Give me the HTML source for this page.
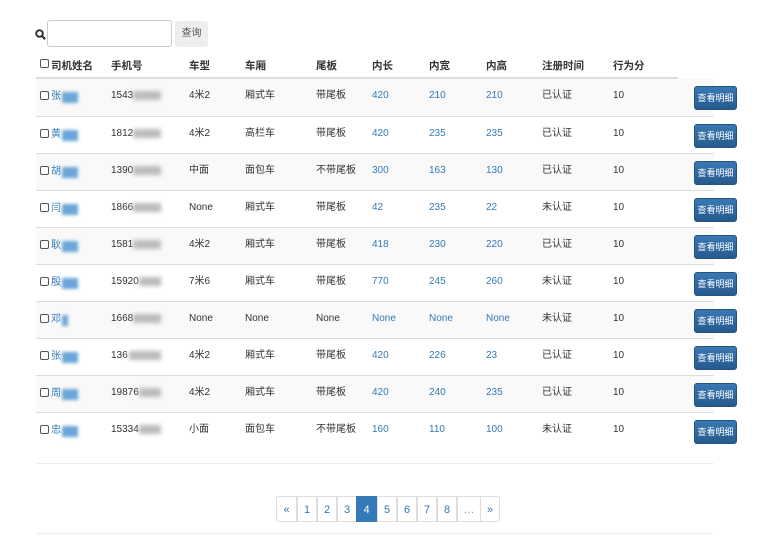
<!DOCTYPE html>
<html><head><meta charset="utf-8"><style>
body{margin:0;width:768px;height:539px;background:#fff;font-family:"Liberation Sans","Noto Sans CJK SC",sans-serif;font-size:10px;color:#333;position:relative;overflow:hidden}
.a{position:absolute;white-space:nowrap}
.row{position:absolute;left:36px;width:678px;height:37px;border-top:1px solid #ddd}
.row.s{background:#f9f9f9}
.row span{position:absolute;top:11px;line-height:12px}
.cb{width:7px;height:7px;border:1px solid #555;border-radius:2px;background:#fff}
.blue{color:#337ab7}
.blur{position:absolute;height:9px;background:#bbb;filter:blur(2px);top:12px}
.nb{position:absolute;height:11px;background:#6aa6d9;filter:blur(1.5px);top:13px}
.btn{position:absolute;left:658px;top:7px;width:43px;height:24px;background:linear-gradient(#3a78b4,#265a8e);border:1px solid #245580;border-radius:3px;color:#fff;font-size:9px;text-align:center;line-height:23px;box-sizing:border-box}
.pg{position:absolute;top:496px;height:26px;border:1px solid #ddd;margin-left:-1px;color:#337ab7;text-align:center;line-height:26px;font-size:11px;box-sizing:border-box}
.h{position:absolute;top:58px;font-weight:bold;font-size:10.5px}
</style></head><body>
<svg class="a" style="left:35px;top:29px" width="11" height="11" viewBox="0 0 11 11"><circle cx="4.5" cy="4.5" r="3.3" fill="none" stroke="#333" stroke-width="2"/><path d="M7 7l3.2 3.2" stroke="#333" stroke-width="2.2"/></svg>
<div class="a" style="left:47px;top:20px;width:125px;height:27px;border:1px solid #ccc;border-radius:3px;box-sizing:border-box"></div>
<div class="a" style="left:175px;top:21px;width:33px;height:26px;background:#eee;border-radius:3px;text-align:center;line-height:26px;color:#555">查询</div>
<div class="a" style="left:40px;top:59px;width:7px;height:7px;border:1px solid #555;border-radius:2px"></div>
<div class="h" style="left:51px">司机姓名</div>
<div class="h" style="left:111px">手机号</div>
<div class="h" style="left:189px">车型</div>
<div class="h" style="left:245px">车厢</div>
<div class="h" style="left:316px">尾板</div>
<div class="h" style="left:372px">内长</div>
<div class="h" style="left:429px">内宽</div>
<div class="h" style="left:486px">内高</div>
<div class="h" style="left:542px">注册时间</div>
<div class="h" style="left:613px">行为分</div>
<div class="a" style="left:36px;top:77px;width:642px;height:2px;background:#ddd"></div>

<div class="row s" style="top:79px;border-top:none"><span class="cb" style="left:4px;top:12px"></span><span class="blue" style="left:15px;top:12px">张</span><div class="nb" style="left:26px;width:16px"></div><span style="left:75px">1543</span><div class="blur" style="left:97px;width:28px"></div><span style="left:153px">4米2</span><span style="left:209px">厢式车</span><span style="left:280px">带尾板</span><span class="blue" style="left:336px">420</span><span class="blue" style="left:393px">210</span><span class="blue" style="left:450px">210</span><span style="left:506px">已认证</span><span style="left:577px">10</span><div class="btn">查看明细</div></div>
<div class="row" style="top:116px"><span class="cb" style="left:4px;top:12px"></span><span class="blue" style="left:15px;top:12px">黄</span><div class="nb" style="left:26px;width:16px"></div><span style="left:75px">1812</span><div class="blur" style="left:97px;width:28px"></div><span style="left:153px">4米2</span><span style="left:209px">高栏车</span><span style="left:280px">带尾板</span><span class="blue" style="left:336px">420</span><span class="blue" style="left:393px">235</span><span class="blue" style="left:450px">235</span><span style="left:506px">已认证</span><span style="left:577px">10</span><div class="btn">查看明细</div></div>
<div class="row s" style="top:153px"><span class="cb" style="left:4px;top:12px"></span><span class="blue" style="left:15px;top:12px">胡</span><div class="nb" style="left:26px;width:16px"></div><span style="left:75px">1390</span><div class="blur" style="left:97px;width:28px"></div><span style="left:153px">中面</span><span style="left:209px">面包车</span><span style="left:280px">不带尾板</span><span class="blue" style="left:336px">300</span><span class="blue" style="left:393px">163</span><span class="blue" style="left:450px">130</span><span style="left:506px">已认证</span><span style="left:577px">10</span><div class="btn">查看明细</div></div>
<div class="row" style="top:190px"><span class="cb" style="left:4px;top:12px"></span><span class="blue" style="left:15px;top:12px">闫</span><div class="nb" style="left:26px;width:16px"></div><span style="left:75px">1866</span><div class="blur" style="left:97px;width:28px"></div><span style="left:153px">None</span><span style="left:209px">厢式车</span><span style="left:280px">带尾板</span><span class="blue" style="left:336px">42</span><span class="blue" style="left:393px">235</span><span class="blue" style="left:450px">22</span><span style="left:506px">未认证</span><span style="left:577px">10</span><div class="btn">查看明细</div></div>
<div class="row s" style="top:227px"><span class="cb" style="left:4px;top:12px"></span><span class="blue" style="left:15px;top:12px">耿</span><div class="nb" style="left:26px;width:16px"></div><span style="left:75px">1581</span><div class="blur" style="left:97px;width:28px"></div><span style="left:153px">4米2</span><span style="left:209px">厢式车</span><span style="left:280px">带尾板</span><span class="blue" style="left:336px">418</span><span class="blue" style="left:393px">230</span><span class="blue" style="left:450px">220</span><span style="left:506px">已认证</span><span style="left:577px">10</span><div class="btn">查看明细</div></div>
<div class="row" style="top:264px"><span class="cb" style="left:4px;top:12px"></span><span class="blue" style="left:15px;top:12px">殷</span><div class="nb" style="left:26px;width:16px"></div><span style="left:75px">15920</span><div class="blur" style="left:103px;width:22px"></div><span style="left:153px">7米6</span><span style="left:209px">厢式车</span><span style="left:280px">带尾板</span><span class="blue" style="left:336px">770</span><span class="blue" style="left:393px">245</span><span class="blue" style="left:450px">260</span><span style="left:506px">未认证</span><span style="left:577px">10</span><div class="btn">查看明细</div></div>
<div class="row s" style="top:301px"><span class="cb" style="left:4px;top:12px"></span><span class="blue" style="left:15px;top:12px">邓</span><div class="nb" style="left:26px;width:6px"></div><span style="left:75px">1668</span><div class="blur" style="left:97px;width:28px"></div><span style="left:153px">None</span><span style="left:209px">None</span><span style="left:280px">None</span><span class="blue" style="left:336px">None</span><span class="blue" style="left:393px">None</span><span class="blue" style="left:450px">None</span><span style="left:506px">未认证</span><span style="left:577px">10</span><div class="btn">查看明细</div></div>
<div class="row" style="top:338px"><span class="cb" style="left:4px;top:12px"></span><span class="blue" style="left:15px;top:12px">张</span><div class="nb" style="left:26px;width:16px"></div><span style="left:75px">136</span><div class="blur" style="left:93px;width:32px"></div><span style="left:153px">4米2</span><span style="left:209px">厢式车</span><span style="left:280px">带尾板</span><span class="blue" style="left:336px">420</span><span class="blue" style="left:393px">226</span><span class="blue" style="left:450px">23</span><span style="left:506px">已认证</span><span style="left:577px">10</span><div class="btn">查看明细</div></div>
<div class="row s" style="top:375px"><span class="cb" style="left:4px;top:12px"></span><span class="blue" style="left:15px;top:12px">周</span><div class="nb" style="left:26px;width:16px"></div><span style="left:75px">19876</span><div class="blur" style="left:103px;width:22px"></div><span style="left:153px">4米2</span><span style="left:209px">厢式车</span><span style="left:280px">带尾板</span><span class="blue" style="left:336px">420</span><span class="blue" style="left:393px">240</span><span class="blue" style="left:450px">235</span><span style="left:506px">已认证</span><span style="left:577px">10</span><div class="btn">查看明细</div></div>
<div class="row" style="top:412px"><span class="cb" style="left:4px;top:12px"></span><span class="blue" style="left:15px;top:12px">忠</span><div class="nb" style="left:26px;width:16px"></div><span style="left:75px">15334</span><div class="blur" style="left:103px;width:22px"></div><span style="left:153px">小面</span><span style="left:209px">面包车</span><span style="left:280px">不带尾板</span><span class="blue" style="left:336px">160</span><span class="blue" style="left:393px">110</span><span class="blue" style="left:450px">100</span><span style="left:506px">未认证</span><span style="left:577px">10</span><div class="btn">查看明细</div></div>

<div class="a" style="left:36px;top:463px;width:678px;height:1px;background:#eee"></div>
<div class="a" style="left:36px;top:533px;width:678px;height:1px;background:#eee"></div>

<div class="pg" style="left:277px;width:21px;border-radius:3px 0 0 3px">«</div>
<div class="pg" style="left:298px;width:20px">1</div>
<div class="pg" style="left:318px;width:20px">2</div>
<div class="pg" style="left:338px;width:20px">3</div>
<div class="pg" style="left:357px;width:21px;background:#337ab7;border-color:#337ab7;color:#fff">4</div>
<div class="pg" style="left:378px;width:20px">5</div>
<div class="pg" style="left:398px;width:20px">6</div>
<div class="pg" style="left:418px;width:20px">7</div>
<div class="pg" style="left:438px;width:20px">8</div>
<div class="pg" style="left:458px;width:24px;color:#999">…</div>
<div class="pg" style="left:481px;width:20px;border-radius:0 3px 3px 0">»</div>
</body></html>
